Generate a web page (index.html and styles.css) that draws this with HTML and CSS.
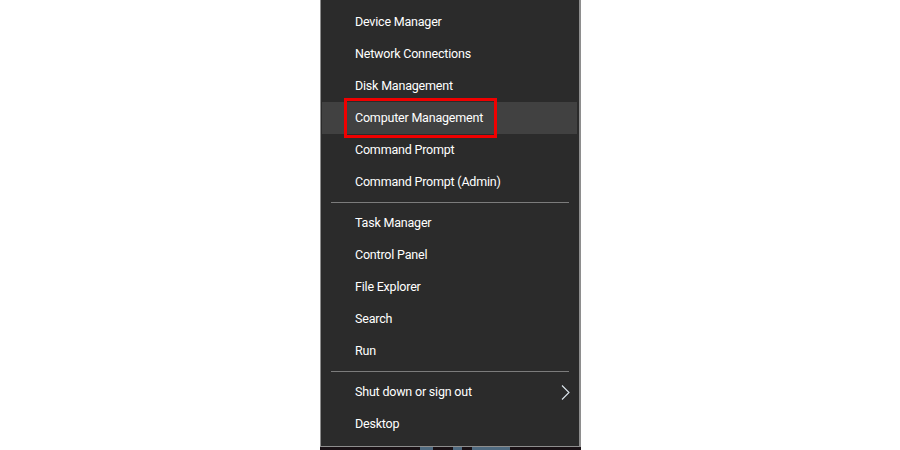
FILE: index.html
```html
<!DOCTYPE html>
<html>
<head>
<meta charset="utf-8">
<link rel="stylesheet" href="styles.css">
</head>
<body>
<div class="page">
  <div class="menu-wrap">
    <div class="menu">
      <div class="item">Device Manager</div>
      <div class="item">Network Connections</div>
      <div class="item">Disk Management</div>
      <div class="item hover">Computer Management<span class="mark"></span></div>
      <div class="item">Command Prompt</div>
      <div class="item">Command Prompt (Admin)</div>
      <div class="sep"></div>
      <div class="item">Task Manager</div>
      <div class="item">Control Panel</div>
      <div class="item">File Explorer</div>
      <div class="item">Search</div>
      <div class="item">Run</div>
      <div class="sep"></div>
      <div class="item sub">Shut down or sign out
        <svg class="chev" width="9" height="15" viewBox="0 0 9 15"><path d="M1 0.5 L8 7.5 L1 14.5" fill="none" stroke="#dde6ee" stroke-width="1.1"/></svg>
      </div>
      <div class="item">Desktop</div>
    </div>
    <div class="taskbar">
      <span class="tb tb1"></span><span class="tb tb2"></span><span class="tb tb3"></span>
    </div>
  </div>
</div>
</body>
</html>
```
FILE: styles.css
```css
html, body {
  margin: 0;
  padding: 0;
  background: #ffffff;
}
.page {
  width: 900px;
  height: 450px;
  overflow: hidden;
  display: flex;
}
.menu-wrap {
  margin-left: 320px;
  width: 261px;
  display: flex;
  flex-direction: column;
}
.menu {
  height: 447px;
  box-sizing: border-box;
  background: #2b2b2b;
  border-left: 1px solid #8e8e8e;
  border-right: 2px solid #8e8e8e;
  border-bottom: 1px solid #8e8e8e;
  padding-top: 6px;
  display: flex;
  flex-direction: column;
  font-family: Roboto, "Liberation Sans", sans-serif;
  font-size: 12.5px;
  letter-spacing: -0.2px;
  color: #ffffff;
}
.item {
  position: relative;
  height: 32px;
  line-height: 32px;
  padding-left: 33px;
  margin: 0 2px 0 1px;
  display: flex;
  align-items: center;
  white-space: nowrap;
}
.item.hover {
  background: #414141;
}
.mark {
  position: absolute;
  left: 22px;
  top: -4px;
  width: 153px;
  height: 40px;
  box-sizing: border-box;
  border: 3px solid #f00000;
}
.sep {
  height: 1px;
  background: #7c7c7c;
  margin: 4px 10px 4px 10px;
  flex: none;
}
.sub {
  justify-content: space-between;
  padding-right: 7px;
}
.chev {
  display: block;
}
.taskbar {
  height: 3px;
  background: #1a1216;
  display: flex;
}
.tb {
  display: block;
  height: 3px;
  background: #4f6a80;
}
.tb1 { margin-left: 100px; width: 13px; }
.tb2 { margin-left: 20px; width: 9px; }
.tb3 { margin-left: 10px; width: 38px; }
```
